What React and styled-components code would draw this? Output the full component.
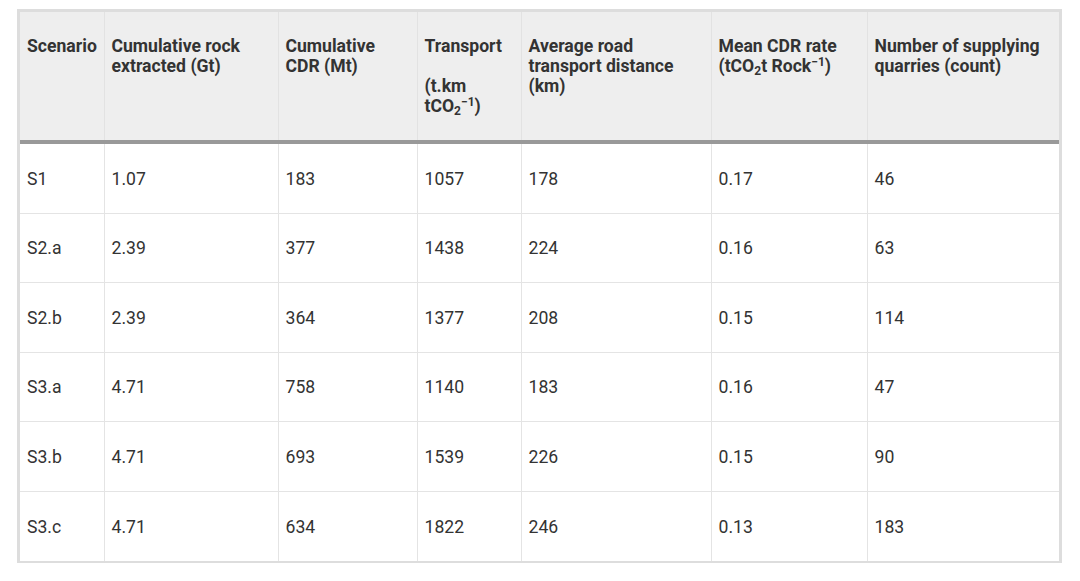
import React from "react";
import styled, { createGlobalStyle } from "styled-components";

const Global = createGlobalStyle`
  html, body { margin: 0; padding: 0; background: #fff; }
  body { font-family: Roboto, "Liberation Sans", Arial, sans-serif; }
`;

const Page = styled.div`
  padding: 9px 18px 0 17px;
`;

const Frame = styled.div`
  border: 3px solid #dddddd;
  border-bottom-width: 2px;
`;

const Table = styled.table`
  width: 100%;
  table-layout: fixed;
  border-collapse: collapse;
  font-size: 17.6px;
  line-height: 20px;
  color: #333;
`;

const Head = styled.thead`
  background: #eeeeee;
  border-bottom: 4px solid #999999;
`;

const Th = styled.th`
  text-align: left;
  vertical-align: top;
  font-weight: 700;
  color: #333;
  padding: 24px 7px 24px;
  border-left: 1px solid #e2e2e2;
  &:first-child { border-left: none; }
`;

const Row = styled.tr`
  border-top: 1px solid #e4e4e4;
  &:first-child { border-top: none; }
`;

const Td = styled.td`
  text-align: left;
  vertical-align: middle;
  font-weight: 400;
  padding: 24.6px 7px 24px;
  border-left: 1px solid #e4e4e4;
  &:first-child { border-left: none; }
`;

const Sub = styled.sub`
  font-size: 12px;
  line-height: 0;
  vertical-align: -3px;
`;

const Sup = styled.sup`
  font-size: 12px;
  line-height: 0;
  vertical-align: 6px;
`;

const widths = [84, 174, 139, 104, 190, 156, 192];

const rows = [
  ["S1", "1.07", "183", "1057", "178", "0.17", "46"],
  ["S2.a", "2.39", "377", "1438", "224", "0.16", "63"],
  ["S2.b", "2.39", "364", "1377", "208", "0.15", "114"],
  ["S3.a", "4.71", "758", "1140", "183", "0.16", "47"],
  ["S3.b", "4.71", "693", "1539", "226", "0.15", "90"],
  ["S3.c", "4.71", "634", "1822", "246", "0.13", "183"],
];

export default function App() {
  return (
    <Page>
      <Global />
      <Frame>
        <Table>
          <colgroup>
            {widths.map((w, i) => (
              <col key={i} style={{ width: w }} />
            ))}
          </colgroup>
          <Head>
            <tr>
              <Th>Scenario</Th>
              <Th>Cumulative rock extracted (Gt)</Th>
              <Th>Cumulative CDR (Mt)</Th>
              <Th>
                Transport
                <br />
                <br />
                (t.km tCO<Sub>2</Sub>
                <Sup>−1</Sup>)
              </Th>
              <Th>Average road transport distance (km)</Th>
              <Th>
                Mean CDR rate (tCO<Sub>2</Sub>t Rock<Sup>−1</Sup>)
              </Th>
              <Th>Number of supplying quarries (count)</Th>
            </tr>
          </Head>
          <tbody>
            {rows.map((r) => (
              <Row key={r[0]}>
                {r.map((c, i) => (
                  <Td key={i}>{c}</Td>
                ))}
              </Row>
            ))}
          </tbody>
        </Table>
      </Frame>
    </Page>
  );
}
